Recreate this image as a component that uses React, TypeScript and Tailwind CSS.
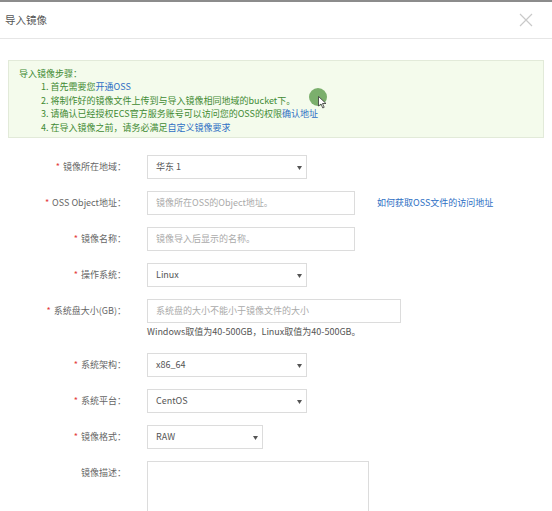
import React from 'react'

const FONT = { fontFamily: '"Noto Sans CJK SC", "Noto Sans", "Liberation Sans", sans-serif' }

function Label({ text, required = true }: { text: string; required?: boolean }) {
  return (
    <div className="w-[126px] shrink-0 text-right text-[9px] leading-[12px] text-[#666]">
      {required && <span className="mr-[3px] text-[#e4393c]">*</span>}
      {text}：
    </div>
  )
}

function Arrow() {
  return (
    <svg width="5" height="4" viewBox="0 0 5 4" className="absolute right-[4px] top-[10px]">
      <path d="M0 0 H5 L2.5 4 Z" fill="#555" />
    </svg>
  )
}

function Select({ value, width }: { value: string; width: string }) {
  return (
    <div className={`relative h-[24px] ${width} border border-[#dcdcdc] bg-white pl-[8px] text-[9px] leading-[22px] text-[#555]`}>
      {value}
      <Arrow />
    </div>
  )
}

function Input({ placeholder, width }: { placeholder: string; width: string }) {
  return (
    <div className={`h-[24px] ${width} border border-[#dcdcdc] bg-white pl-[8px] text-[9px] leading-[22px] text-[#aaa]`}>
      {placeholder}
    </div>
  )
}

export default function App() {
  return (
    <div className="relative h-[511px] w-[552px] overflow-hidden bg-white" style={FONT}>
      <div className="h-[2px] bg-[#8c8c8c]" />

      {/* Header */}
      <div className="flex h-[37px] items-center justify-between border-b border-[#e6e6e6] pl-[5px] pr-[19px]">
        <span className="text-[10.5px] text-[#555]">导入镜像</span>
        <svg width="14" height="14" viewBox="0 0 14 14">
          <path d="M1 1 L13 13 M13 1 L1 13" stroke="#c9c9c9" strokeWidth="1.2" />
        </svg>
      </div>

      {/* Tips */}
      <div className="mx-[8px] mt-[21px] border border-[#e2ead9] bg-[#f4fbec] pb-[3px] pl-[10px] pt-[6px] text-[9px] leading-[13.4px] text-[#3e8a32]">
        <div>导入镜像步骤：</div>
        <div className="pl-[22px]">
          <div>1. 首先需要您<span className="text-[#2e6fc4]">开通OSS</span></div>
          <div>2. 将制作好的镜像文件上传到与导入镜像相同地域的bucket下。</div>
          <div>3. 请确认已经授权ECS官方服务账号可以访问您的OSS的权限<span className="text-[#2e6fc4]">确认地址</span></div>
          <div>4. 在导入镜像之前，请务必满足<span className="text-[#2e6fc4]">自定义镜像要求</span></div>
        </div>
      </div>

      {/* Form */}
      <div className="mt-[17px] flex flex-col">
        <div className="flex items-center gap-[21px]">
          <Label text="镜像所在地域" />
          <Select value="华东 1" width="w-[160px]" />
        </div>
        <div className="mt-[12px] flex items-center gap-[21px]">
          <Label text="OSS Object地址" />
          <Input placeholder="镜像所在OSS的Object地址。" width="w-[208px]" />
          <span className="ml-[1px] text-[9px] text-[#2e6fc4]">如何获取OSS文件的访问地址</span>
        </div>
        <div className="mt-[12px] flex items-center gap-[21px]">
          <Label text="镜像名称" />
          <Input placeholder="镜像导入后显示的名称。" width="w-[208px]" />
        </div>
        <div className="mt-[12px] flex items-center gap-[21px]">
          <Label text="操作系统" />
          <Select value="Linux" width="w-[160px]" />
        </div>
        <div className="mt-[12px] flex items-center gap-[21px]">
          <Label text="系统盘大小(GB)" />
          <Input placeholder="系统盘的大小不能小于镜像文件的大小" width="w-[254px]" />
        </div>
        <div className="ml-[147px] mt-[2px] text-[9px] leading-[14px] text-[#555]">
          Windows取值为40-500GB，Linux取值为40-500GB。
        </div>
        <div className="mt-[14px] flex items-center gap-[21px]">
          <Label text="系统架构" />
          <Select value="x86_64" width="w-[160px]" />
        </div>
        <div className="mt-[12px] flex items-center gap-[21px]">
          <Label text="系统平台" />
          <Select value="CentOS" width="w-[160px]" />
        </div>
        <div className="mt-[12px] flex items-center gap-[21px]">
          <Label text="镜像格式" />
          <Select value="RAW" width="w-[116px]" />
        </div>
        <div className="mt-[12px] flex items-start gap-[21px]">
          <div className="pt-[6px]">
            <Label text="镜像描述" required={false} />
          </div>
          <div className="h-[70px] w-[222px] border border-[#dcdcdc] bg-white" />
        </div>
      </div>

      {/* Cursor highlight from recording */}
      <div className="absolute left-[309px] top-[88px] h-[18px] w-[18px] rounded-full bg-[#6ea65e] opacity-90" />
      <svg width="9" height="13" viewBox="0 0 9 13" className="absolute left-[318px] top-[96px]">
        <path d="M0.5 0.5 L0.5 10 L3 8 L4.8 12 L6.2 11.3 L4.5 7.5 L8 7.5 Z" fill="#fff" stroke="#333" strokeWidth="0.8" />
      </svg>
    </div>
  )
}
